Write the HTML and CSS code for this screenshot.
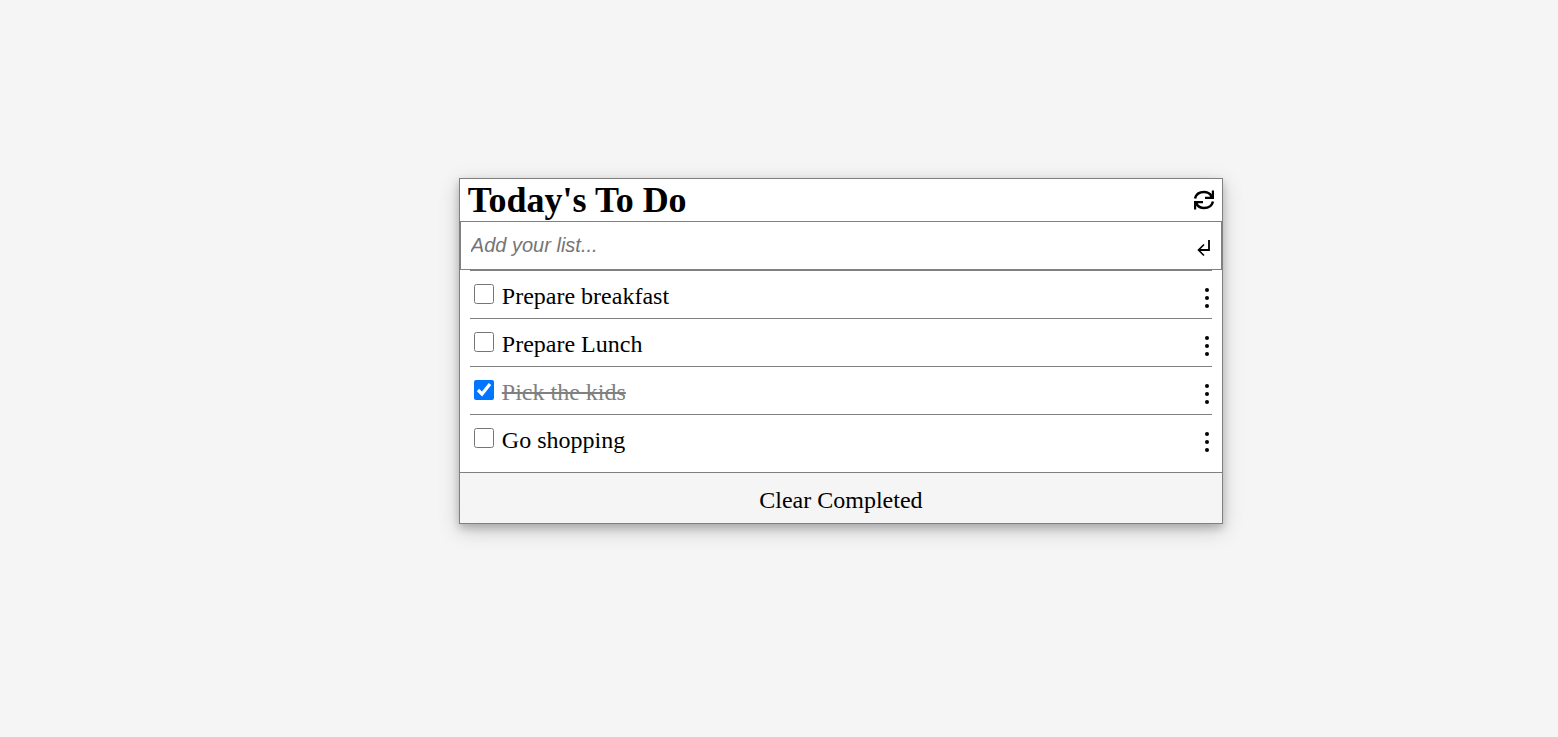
FILE: index.html
```html
<!DOCTYPE html>
<html lang="en">
<head>
<meta charset="utf-8">
<meta name="viewport" content="width=device-width, initial-scale=1">
<title>Today's To Do</title>
<link rel="stylesheet" href="styles.css">
</head>
<body>
<main class="card">
  <header class="header">
    <h1 class="title">Today's To Do</h1>
    <button class="icon-button" type="button" aria-label="Refresh">
      <svg class="refresh" viewBox="0 0 22 22" aria-hidden="true">
        <path d="M2 9.500C3 5.500 6.500 3 11 3c3.200 0 5.800 1.300 7.600 4M20 12.500c-1 4-4.500 6.500-9 6.500-3.200 0-5.800-1.300-7.600-4" fill="none" stroke="#000" stroke-width="2.500"/>
        <path d="M21 1.500V10h-9V7.800h4.500l2.300-2V1.500zM1 20.500V12h9v2.200H5.500l-2.300 2v4.300z"/>
      </svg>
    </button>
  </header>
  <form class="add">
    <input class="add-input" type="text" placeholder="Add your list..." aria-label="Add your list">
    <button class="icon-button" type="button" aria-label="Add">
      <svg class="enter" viewBox="0 0 14 18" fill="none" stroke="#000" stroke-width="2" aria-hidden="true">
        <path d="M12 1v10H2" stroke-width="1.800"/><path d="M7 5.500L1.500 11 7 16.500" stroke-width="1.600"/>
      </svg>
    </button>
  </form>
  <ul class="list">
    <li class="item">
      <label class="task"><input class="check" type="checkbox"><span>Prepare breakfast</span></label>
      <button class="icon-button" type="button" aria-label="Options for Prepare breakfast"><svg class="dots" viewBox="0 0 4 20" aria-hidden="true"><circle cx="2" cy="2" r="2"/><circle cx="2" cy="10" r="2"/><circle cx="2" cy="18" r="2"/></svg></button>
    </li>
    <li class="item">
      <label class="task"><input class="check" type="checkbox"><span>Prepare Lunch</span></label>
      <button class="icon-button" type="button" aria-label="Options for Prepare Lunch"><svg class="dots" viewBox="0 0 4 20" aria-hidden="true"><circle cx="2" cy="2" r="2"/><circle cx="2" cy="10" r="2"/><circle cx="2" cy="18" r="2"/></svg></button>
    </li>
    <li class="item">
      <label class="task done"><input class="check" type="checkbox" checked><span>Pick the kids</span></label>
      <button class="icon-button" type="button" aria-label="Options for Pick the kids"><svg class="dots" viewBox="0 0 4 20" aria-hidden="true"><circle cx="2" cy="2" r="2"/><circle cx="2" cy="10" r="2"/><circle cx="2" cy="18" r="2"/></svg></button>
    </li>
    <li class="item">
      <label class="task"><input class="check" type="checkbox"><span>Go shopping</span></label>
      <button class="icon-button" type="button" aria-label="Options for Go shopping"><svg class="dots" viewBox="0 0 4 20" aria-hidden="true"><circle cx="2" cy="2" r="2"/><circle cx="2" cy="10" r="2"/><circle cx="2" cy="18" r="2"/></svg></button>
    </li>
  </ul>
  <button class="clear" type="button">Clear Completed</button>
</main>
</body>
</html>
```

FILE: styles.css
```css
* {
  box-sizing: border-box;
}

body {
  min-height: 100vh;
  margin: 0;
  padding-top: 178px;
  background: #f5f5f5;
  color: #000;
  font-family: "Liberation Serif", "Times New Roman", serif;
  font-size: 24px;
}

.card {
  width: 49.05%;
  margin-left: 29.45%;
  background: #fff;
  border: 1px solid #808080;
  box-shadow: 0 4px 8px rgba(0, 0, 0, 0.2), 0 6px 20px rgba(0, 0, 0, 0.19);
}

.header {
  display: flex;
  align-items: center;
  justify-content: space-between;
  padding: 0 7px 0 8px;
}

.title {
  margin: 0;
  font-size: 36px;
  line-height: 42px;
}

.icon-button {
  display: flex;
  padding: 0;
  border: 0;
  background: none;
  cursor: pointer;
}

.refresh {
  width: 22px;
  height: 22px;
}

.add {
  display: flex;
  align-items: center;
  padding-right: 10px;
  border: 1px solid #808080;
}

.add-input {
  flex: 1;
  min-width: 0;
  height: 47px;
  padding: 0 10px;
  border: 0;
  outline: 0;
  background: none;
  font: italic 20px "Liberation Sans", Arial, sans-serif;
}

.add-input::placeholder {
  color: #757575;
}

.enter {
  width: 14px;
  height: 18px;
  margin-top: 4px;
}

.list {
  margin: 0;
  padding: 0 10px 10px;
  list-style: none;
}

.item {
  display: flex;
  align-items: center;
  justify-content: space-between;
  height: 48px;
  padding: 6px 3px 0 4px;
  border-top: 1px solid #808080;
}

.task {
  display: flex;
  align-items: flex-start;
  gap: 8px;
  height: 28px;
  line-height: 24px;
}

.done {
  color: #808080;
  text-decoration: line-through;
}

.check {
  width: 20px;
  height: 20px;
  margin: 0;
}

.dots {
  width: 4px;
  height: 20px;
}

.clear {
  display: block;
  width: 100%;
  padding: 13px 0 9px;
  border: 0;
  border-top: 1px solid #808080;
  background: #f5f5f5;
  color: #000;
  font: inherit;
  line-height: 28px;
  cursor: pointer;
}
```
